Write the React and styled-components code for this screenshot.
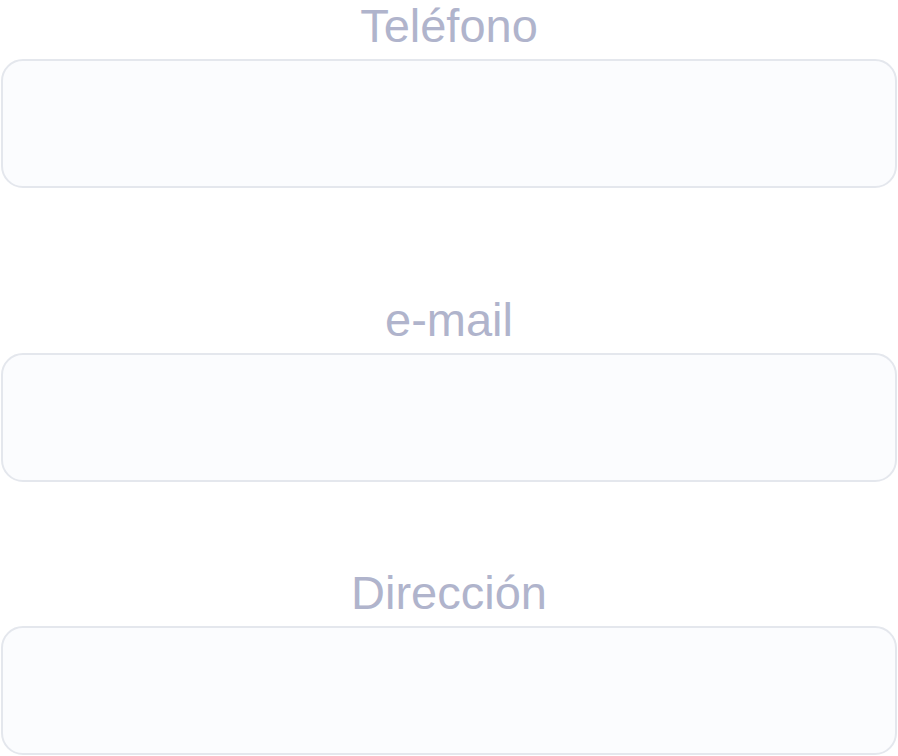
import React from "react"
import styled, { createGlobalStyle } from "styled-components"

const GlobalStyle = createGlobalStyle`
  html, body {
    margin: 0;
    padding: 0;
    background: #ffffff;
  }
`

const Form = styled.form`
  display: flex;
  flex-direction: column;
  padding: 0 1px;
  font-family: "Liberation Sans", Arial, sans-serif;
`

const Field = styled.div`
  display: flex;
  flex-direction: column;
  align-items: center;
  margin-top: ${props => props.$top}px;
`

const Label = styled.label`
  font-size: 47px;
  line-height: 52px;
  color: #b0b4cc;
  margin-bottom: ${props => props.$gap}px;
`

const Input = styled.input`
  box-sizing: border-box;
  width: 100%;
  height: 129px;
  border: 2px solid #e4e7ed;
  border-radius: 22px;
  background: #fbfcfe;
  outline: none;
  font-family: inherit;
  font-size: 24px;
  padding: 0 24px;
`

const fields = [
  { label: "Teléfono", type: "tel", top: 0, gap: 7 },
  { label: "e-mail", type: "email", top: 106, gap: 7 },
  { label: "Dirección", type: "text", top: 85, gap: 7 },
]

const App = () => (
  <>
    <GlobalStyle />
    <Form>
      {fields.map(f => (
        <Field key={f.label} $top={f.top}>
          <Label $gap={f.gap}>{f.label}</Label>
          <Input type={f.type} />
        </Field>
      ))}
    </Form>
  </>
)

export default App
